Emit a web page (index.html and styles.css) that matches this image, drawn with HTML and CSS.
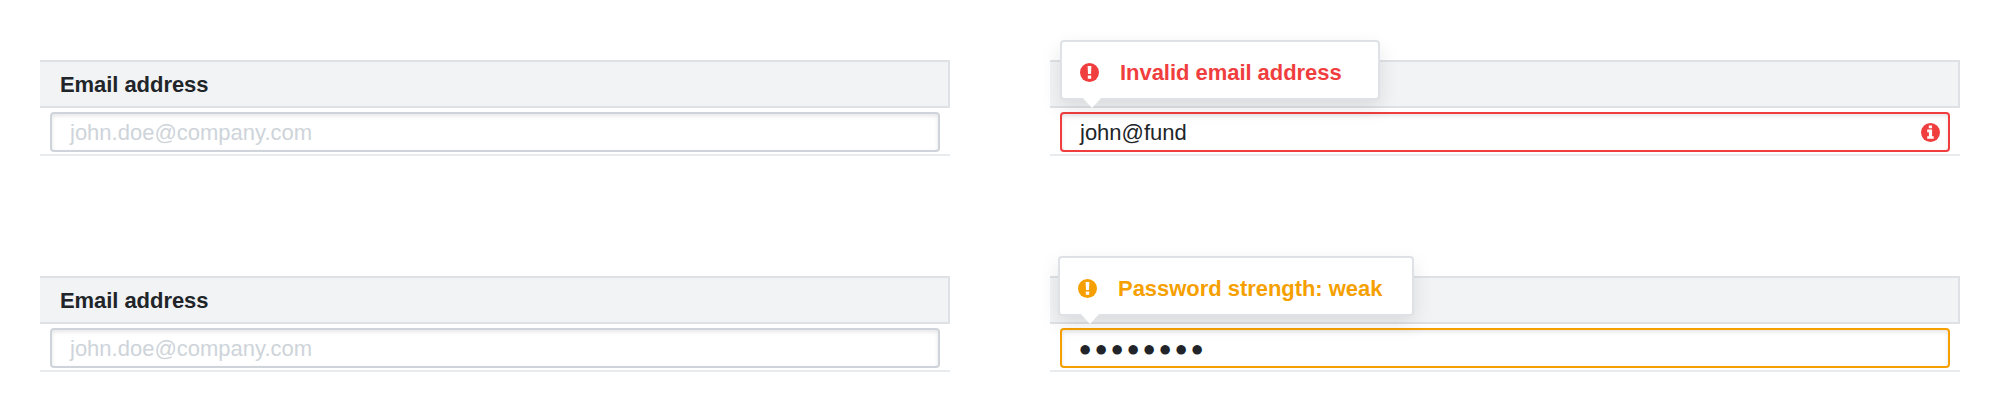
FILE: index.html
```
<!DOCTYPE html>
<html lang="en">
<head>
<meta charset="utf-8">
<title>Form fields</title>
<link rel="stylesheet" href="styles.css">
</head>
<body>
<main class="grid">
  <section class="field">
    <div class="field-head">Email address</div>
    <div class="field-body"><div class="input placeholder"><span>john.doe@company.com</span></div></div>
  </section>
  <section class="field">
    <div class="field-head"></div>
    <div class="field-body">
      <div class="input error">
        <span>john@fund</span>
        <svg class="info" viewBox="0 0 19 19"><circle cx="9.5" cy="9.5" r="9.5" fill="#f03e3e"/><path fill="#fff" d="M7.8 2.4h3.2v2.8H7.8zM6.2 6.6h4.9v6.6h1.6v2.6H6.2v-2.6h1.7V9.2H6.2z"/></svg>
      </div>
    </div>
    <div class="tooltip tooltip-error">
      <svg class="alert" viewBox="0 0 19 19"><circle cx="9.5" cy="9.5" r="9.5" fill="currentColor"/><path fill="#fff" d="M7.6 3h3.8l-.4 8H8zM7.8 12.5h3.4v3.2H7.8z"/></svg>
      <span>Invalid email address</span>
    </div>
  </section>
  <section class="field">
    <div class="field-head">Email address</div>
    <div class="field-body"><div class="input placeholder"><span>john.doe@company.com</span></div></div>
  </section>
  <section class="field">
    <div class="field-head"></div>
    <div class="field-body"><div class="input warning"><span class="dots">●●●●●●●●</span></div></div>
    <div class="tooltip tooltip-warning">
      <svg class="alert" viewBox="0 0 19 19"><circle cx="9.5" cy="9.5" r="9.5" fill="currentColor"/><path fill="#fff" d="M7.6 3h3.8l-.4 8H8zM7.8 12.5h3.4v3.2H7.8z"/></svg>
      <span>Password strength: weak</span>
    </div>
  </section>
</main>
</body>
</html>
```
FILE: styles.css
```
* { box-sizing: border-box; }
body {
  margin: 0;
  background: #fff;
  color: #212529;
  font: 22px/26px "Liberation Sans", Arial, sans-serif;
}
.grid {
  display: grid;
  grid-template-columns: 910px 910px;
  column-gap: 100px;
  row-gap: 120px;
  padding: 60px 40px 0;
}
.field { position: relative; height: 96px; }
.field-head {
  height: 48px;
  padding: 10px 20px 0;
  background: #f1f3f5;
  border: 2px solid #dee2e6;
  border-left: 0;
  font-weight: bold;
  letter-spacing: -.06px;
}
.field-body {
  height: 48px;
  padding: 4px 10px 2px;
  border-bottom: 2px solid #e9ecef;
}
.input {
  display: flex;
  align-items: center;
  justify-content: space-between;
  height: 40px;
  padding: 0 8px 0 18px;
  border: 2px solid #ced4da;
  border-radius: 4px;
  box-shadow: inset 0 2px 4px rgba(0, 0, 0, .1);
}
.input span { padding-top: 2px; }
.placeholder { color: #ced4da; }
.error { border-color: #f03e3e; }
.warning { border-color: #f59f00; }
.input .dots { margin-left: -1.5px; letter-spacing: 2.7px; }
.info, .alert { display: block; width: 19px; height: 19px; flex: none; }
.tooltip {
  position: absolute;
  top: -20px;
  left: 10px;
  display: flex;
  align-items: center;
  gap: 21px;
  width: 320px;
  height: 60px;
  padding: 5px 0 0 18px;
  background: #fff;
  border: 2px solid #dee2e6;
  border-radius: 4px;
  box-shadow: 0 8px 20px rgba(0, 0, 0, .1);
  font-weight: bold;
  letter-spacing: -.04px;
}
.tooltip span { padding-top: 1px; }
.tooltip::after {
  content: "";
  position: absolute;
  top: 55px;
  left: 20px;
  width: 20px;
  height: 11px;
  background: #fff;
  clip-path: polygon(0 0, 100% 0, 50% 100%);
}
.tooltip-error { color: #f03e3e; }
.tooltip-warning { left: 8px; width: 356px; color: #f59f00; }
```
